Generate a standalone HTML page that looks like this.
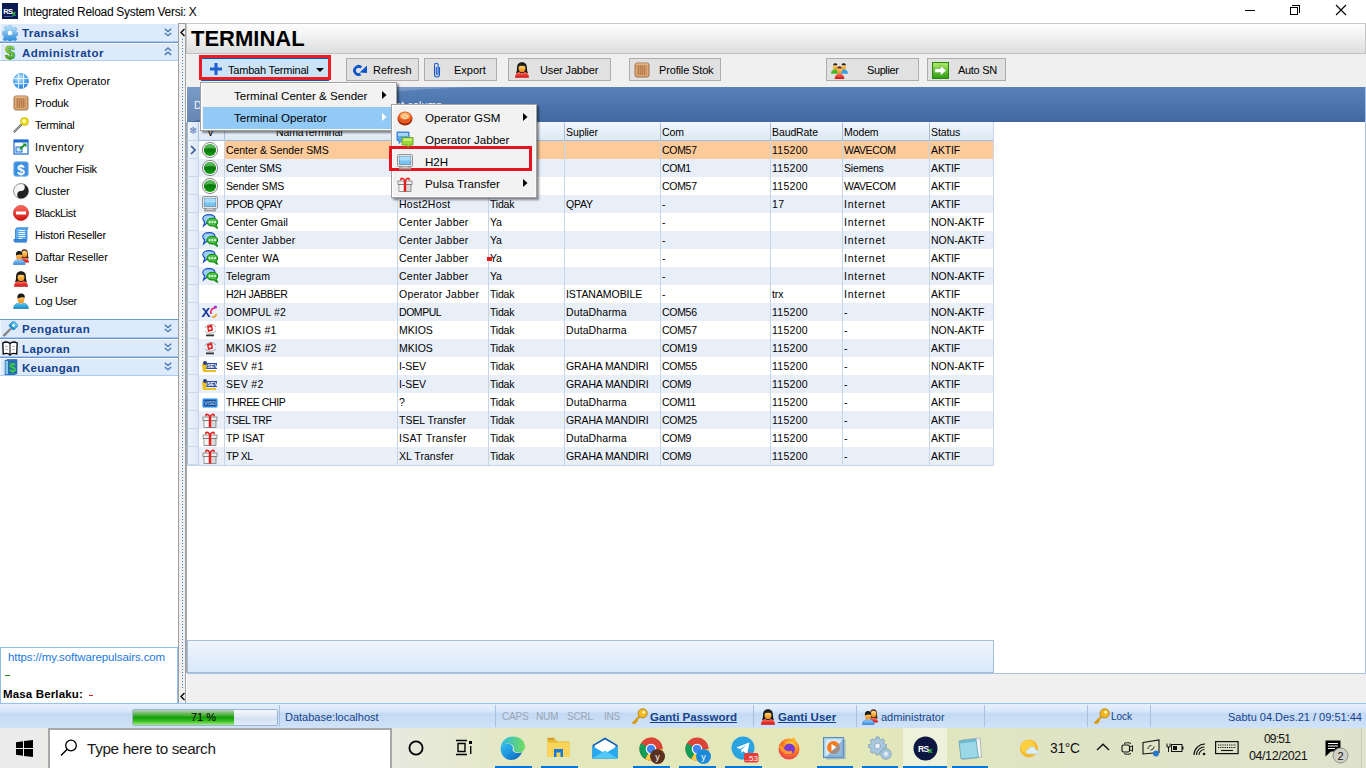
<!DOCTYPE html>
<html><head><meta charset="utf-8">
<style>
*{margin:0;padding:0;box-sizing:border-box}
html,body{width:1366px;height:768px;overflow:hidden;background:#fff;font-family:"Liberation Sans",sans-serif;color:#000}
.a{position:absolute}
.t{position:absolute;white-space:pre;line-height:1}
/* sidebar bands */
.band{position:absolute;left:0;width:178px;height:18px;background:linear-gradient(#dbe9fc,#d3e4fa);border-left:1px solid #f4f8fe}
.band .bt{position:absolute;left:22px;top:3px;font:bold 12px "Liberation Sans",sans-serif;color:#15428b;white-space:pre;line-height:1}
.bl{position:absolute;left:0;width:178px;height:1px;background:#6f9ad6}
.item{position:absolute;left:35px;font-size:11px;white-space:pre;line-height:1}
.btn{position:absolute;top:58px;height:23px;background:#e1e1e1;border:1px solid #adadad}
.btn .t{font-size:11px;top:6px}
.row{position:absolute;left:199px;width:794px;height:18px}
.cell{position:absolute;top:4px;font-size:10.5px;white-space:pre;line-height:1;letter-spacing:-0.15px}
.vline{position:absolute;width:1px;background:#c5d5ea}
</style></head><body>
<svg width="0" height="0" style="position:absolute">
<defs>
<linearGradient id="gBlue" x1="0" y1="0" x2="0" y2="1"><stop offset="0" stop-color="#bfe6fb"/><stop offset="1" stop-color="#1b7fd6"/></linearGradient>
<linearGradient id="gGreen" x1="0" y1="0" x2="0" y2="1"><stop offset="0" stop-color="#b6ee6a"/><stop offset="1" stop-color="#2a9a10"/></linearGradient>
<linearGradient id="gDot" x1="0" y1="0" x2="0" y2="1"><stop offset="0" stop-color="#3aa83a"/><stop offset="0.5" stop-color="#0a780a"/><stop offset="1" stop-color="#10a010"/></linearGradient>
<linearGradient id="gSkin" x1="0" y1="0" x2="0" y2="1"><stop offset="0" stop-color="#ffe08a"/><stop offset="1" stop-color="#f08a10"/></linearGradient>
<linearGradient id="gRed" x1="0" y1="0" x2="0" y2="1"><stop offset="0" stop-color="#ff7060"/><stop offset="1" stop-color="#d01010"/></linearGradient>
<linearGradient id="gCyan" x1="0" y1="0" x2="0" y2="1"><stop offset="0" stop-color="#5fd0f5"/><stop offset="1" stop-color="#1488c8"/></linearGradient>
<linearGradient id="gLBlue" x1="0" y1="0" x2="0" y2="1"><stop offset="0" stop-color="#9ad0fa"/><stop offset="1" stop-color="#3a8ee0"/></linearGradient>
<symbol id="gear" viewBox="0 0 16 16"><path d="M6.6 0.5h2.8l.4 2.2 1.4.6 1.9-1.3 2 2-1.3 1.9.6 1.4 2.2.4v2.8l-2.2.4-.6 1.4 1.3 1.9-2 2-1.9-1.3-1.4.6-.4 2.2H6.6l-.4-2.2-1.4-.6-1.9 1.3-2-2 1.3-1.9-.6-1.4L.5 9.4V6.6l2.2-.4.6-1.4L2 2.9l2-2 1.9 1.3 1.4-.6z" fill="url(#gBlue)" stroke="#5a9ccc" stroke-width=".4"/><circle cx="8" cy="8" r="2.3" fill="#fff"/></symbol>
<symbol id="dollar" viewBox="0 0 16 16"><text x="8" y="15" text-anchor="middle" font-family="Liberation Sans" font-weight="bold" font-size="18" fill="url(#gGreen)" stroke="#2f8a10" stroke-width=".5">$</text></symbol>
<symbol id="globe" viewBox="0 0 16 16"><defs><radialGradient id="glb" cx=".4" cy=".3" r=".8"><stop offset="0" stop-color="#bfe4fc"/><stop offset=".6" stop-color="#4aa6ee"/><stop offset="1" stop-color="#1a6ac8"/></radialGradient></defs><circle cx="8" cy="8" r="7.6" fill="url(#glb)" stroke="#3a88d8" stroke-width=".5"/><path d="M5.5 .8v14.4M10.5 .8v14.4M.8 5.5h14.4M.8 10.5h14.4" stroke="#fff" stroke-width=".9" opacity=".9"/></symbol>
<symbol id="crate" viewBox="0 0 16 16"><rect x="1" y="1" width="14" height="14" rx="2" fill="#dca878" stroke="#9a6a3a" stroke-width=".9"/><rect x="3" y="3.2" width="10" height="9.6" fill="#cf9664"/><path d="M4.5 3.2v9.6M6.5 3.2v9.6M8.5 3.2v9.6M10.5 3.2v9.6" stroke="#a87040" stroke-width=".7"/><path d="M2 2h12" stroke="#f0c898" stroke-width=".8"/></symbol>
<symbol id="pin" viewBox="0 0 16 16"><path d="M1.5 14.5L10 6" stroke="#606060" stroke-width="2.2" stroke-linecap="round"/><path d="M1.5 14.5L10 6" stroke="#d0d0d0" stroke-width=".8"/><circle cx="11.5" cy="4.5" r="4" fill="#f2e020" stroke="#b8a000" stroke-width=".6"/><circle cx="11" cy="4" r="1.8" fill="#fffbb0"/></symbol>
<symbol id="inventory" viewBox="0 0 16 16"><rect x="1" y="1" width="14" height="14" fill="#fff" stroke="#1a6ad0" stroke-width="1.2"/><rect x="1" y="1" width="14" height="2.5" fill="#1a6ad0"/><rect x="3" y="8" width="6" height="5" fill="#cfe4fa" stroke="#1a6ad0"/><path d="M7 10L12 5.5" stroke="#1a9a2a" stroke-width="2"/><path d="M9.5 4.5h4v4z" fill="#1a9a2a"/></symbol>
<symbol id="voucher" viewBox="0 0 16 16"><rect x=".8" y=".8" width="14.4" height="14.4" rx="2" fill="#3a8ee0" stroke="#80b8ee"/><text x="8" y="13.5" text-anchor="middle" font-family="Liberation Sans" font-weight="bold" font-size="14" fill="#fff">$</text></symbol>
<symbol id="yinyang" viewBox="0 0 16 16"><circle cx="8" cy="8" r="7.5" fill="#f4f4f4" stroke="#555" stroke-width=".6"/><path d="M8 .5A7.5 7.5 0 0 1 8 15.5A3.75 3.75 0 0 1 8 8A3.75 3.75 0 0 0 8 .5z" fill="#222"/><circle cx="8" cy="4.25" r="1.1" fill="#fff"/><circle cx="8" cy="11.75" r="1.1" fill="#222"/></symbol>
<symbol id="noentry" viewBox="0 0 16 16"><circle cx="8" cy="8" r="7.6" fill="url(#gRed)" stroke="#b00" stroke-width=".5"/><rect x="3" y="6.5" width="10" height="3" fill="#fff"/></symbol>
<symbol id="scroll" viewBox="0 0 16 16"><path d="M4.5 .8h10.7c-.8.6-1.2 1.3-1.2 2.2v10.5H2.5V3c0-1 .8-2.2 2-2.2z" fill="#5aaaf0" stroke="#1a6ac0" stroke-width=".7"/><path d="M5.5 3.5h6.5M5.5 5.5h6.5M5.5 7.5h6.5M5.5 9.5h6.5M5.5 11.5h4" stroke="#fff" stroke-width=".9"/><path d="M.8 12.5h11.5c0 1.5.5 2.5 1.5 2.7H2.3C1.3 15.2.8 14 .8 12.5z" fill="#3a8ae0" stroke="#1a6ac0" stroke-width=".6"/></symbol>
<symbol id="userF" viewBox="0 0 16 16"><path d="M3 6.5C3 1.5 5.5.3 8 .3s5 1.2 5 6.2c0 2.5.5 3.5 1 4.5H2c.5-1 1-2 1-4.5z" fill="#1a1a1a"/><ellipse cx="8" cy="6.3" rx="3.4" ry="4" fill="url(#gSkin)"/><path d="M4.6 4.5C5 2.5 6.5 1.8 8 1.8s3 .7 3.4 2.7C10 3.5 6 3.5 4.6 4.5z" fill="#1a1a1a"/><path d="M1 15.7c0-3.5 2-5.5 4.5-5.7.8.8 1.6 1.2 2.5 1.2s1.7-.4 2.5-1.2c2.5.2 4.5 2.2 4.5 5.7z" fill="url(#gRed)"/></symbol>
<symbol id="userM" viewBox="0 0 16 16"><ellipse cx="8" cy="6" rx="3.4" ry="4.2" fill="url(#gSkin)"/><path d="M4.5 5.5C4 1.5 6 .5 8 .5s4.3 1 3.7 4.5C10.5 3.5 7 4.5 4.5 5.5z" fill="#1a1a1a"/><path d="M.5 15.7c0-3.5 2.5-5.5 5-5.8.7.7 1.5 1 2.5 1s1.8-.3 2.5-1c2.5.3 5 2.3 5 5.8z" fill="url(#gCyan)" stroke="#1a6a98" stroke-width=".4"/></symbol>
<symbol id="users2" viewBox="0 0 16 16"><path d="M8 5.5C8 1.5 9.5.3 11.5.3s3.5 1.2 3.5 5.2c0 2 .5 3 1 4H7c.5-1 1-2 1-4z" fill="#5a3018"/><ellipse cx="11.5" cy="5" rx="2.7" ry="3.2" fill="url(#gSkin)"/><path d="M7.5 13.5c0-3 1.5-4.5 4-4.5s4.5 1.5 4.5 4.5z" fill="url(#gRed)"/><ellipse cx="6" cy="7" rx="3" ry="3.6" fill="url(#gSkin)"/><path d="M3 6.5C2.6 3 4.3 2 6 2s3.8 1 3.2 4.3C8 5 5 5.5 3 6.5z" fill="#1a1a1a"/><path d="M.3 15.7c0-3.3 2.2-5 4.5-5.2.5.5 1.2.8 1.7.8s1.2-.3 1.7-.8c2.3.2 4 1.9 4 5.2z" fill="url(#gLBlue)" stroke="#2a6ab0" stroke-width=".4"/></symbol>
<symbol id="users3" viewBox="0 0 16 16"><ellipse cx="4" cy="5" rx="2.2" ry="2.6" fill="url(#gSkin)"/><path d="M2 3c0-2.5 4-2.5 4 0z" fill="#222"/><path d="M0 11c0-3 1.5-4 4-4s4 1 4 4z" fill="#4ab82a"/><ellipse cx="12" cy="5" rx="2.2" ry="2.6" fill="url(#gSkin)"/><path d="M10 3c0-2.5 4-2.5 4 0z" fill="#222"/><path d="M8 11c0-3 1.5-4 4-4s4 1 4 4z" fill="#3aa0e8"/><ellipse cx="8" cy="8" rx="2.4" ry="2.8" fill="url(#gSkin)"/><path d="M5.8 6c0-2.8 4.4-2.8 4.4 0z" fill="#6a2a10"/><path d="M3.5 16c0-3.5 2-5 4.5-5s4.5 1.5 4.5 5z" fill="url(#gRed)"/></symbol>
<symbol id="keyBlue" viewBox="0 0 16 16"><path d="M1.5 15L9 7.5" stroke="#888" stroke-width="2.4"/><path d="M2 13l1.5 1.5M3.5 11.5l1.5 1.5" stroke="#888" stroke-width="1.2"/><rect x="8" y="1" width="7" height="7" rx="1.5" transform="rotate(45 11.5 4.5)" fill="url(#gCyan)" stroke="#1a6ab0" stroke-width=".5"/><rect x="10.2" y="3.2" width="2.6" height="2.6" fill="#fff" transform="rotate(45 11.5 4.5)"/></symbol>
<symbol id="book" viewBox="0 0 16 16"><path d="M.8 3l.5 11c2.5-1 5-1 6.7 1 1.7-2 4.2-2 6.7-1l.5-11c-2.5-1.3-5.2-1.3-7.2.5C6 1.7 3.3 1.7.8 3z" fill="#fff" stroke="#000" stroke-width="1.3"/><path d="M8 3.5V15" stroke="#000" stroke-width="1"/><path d="M3 6l3 1M3 9l3 1M10 7l3-1M10 10l3-1" stroke="#888" stroke-width=".7"/></symbol>
<symbol id="moneybook" viewBox="0 0 16 16"><path d="M2 1.5l3-1h9v14l-3 1.5H2z" fill="#2a7ac8" stroke="#1a4a8a" stroke-width=".5"/><rect x="5" y="1.5" width="9" height="13" fill="#2a6ab0"/><rect x="2.5" y="2" width="2.5" height="13" fill="#8ac8f0"/><text x="9.5" y="12.5" text-anchor="middle" font-family="Liberation Sans" font-weight="bold" font-size="12" fill="#3ad03a">$</text></symbol>
<symbol id="plus" viewBox="0 0 12 12"><path d="M4.5 0h3v4.5H12v3H7.5V12h-3V7.5H0v-3h4.5z" fill="#1f5fd0"/></symbol>
<symbol id="refresh" viewBox="0 0 16 12"><path d="M9.3 3.6A4 4 0 1 0 8.5 10" stroke="#0b56c8" stroke-width="2.8" fill="none"/><path d="M7.6 8.6L15 1.6V8.9z" fill="#0b56c8"/></symbol>
<symbol id="clip" viewBox="0 0 10 16"><path d="M7.5 5v7.5a2.5 2.5 0 0 1-5 0V3a1.8 1.8 0 0 1 3.6 0v8.5a.9.9 0 0 1-1.8 0V5" stroke="#1a5ac8" stroke-width="1.1" fill="none"/></symbol>
<symbol id="arrowG" viewBox="0 0 16 16"><rect x=".5" y=".5" width="15" height="15" fill="url(#gGreen)" stroke="#2a8a10"/><path d="M2.5 6h5.5V3l5.5 5-5.5 5v-3H2.5z" fill="#fff" stroke="#3a9a20" stroke-width=".5"/></symbol>
<symbol id="dot" viewBox="0 0 18 18"><circle cx="9" cy="9" r="7.6" fill="#fafafa" stroke="#8a8a8a" stroke-width="1"/><circle cx="9" cy="9" r="6.1" fill="url(#gDot)"/><path d="M3.8 8.2C4.5 5 6.5 3.4 9 3.4s4.5 1.6 5.2 4.2C12 6.6 6 6.6 3.8 8.2z" fill="#7ad07a" opacity=".55"/></symbol>
<symbol id="monitor" viewBox="0 0 16 16"><rect x=".5" y=".5" width="15" height="12" rx="1.2" fill="#e8e8e8" stroke="#8a8a8a" stroke-width=".9"/><rect x="2.2" y="2.2" width="11.6" height="8.4" fill="#78c4f0" stroke="#4a6a8a" stroke-width=".5"/><rect x="2.5" y="2.5" width="11" height="4" fill="#a8dcf8"/><rect x="2" y="13.2" width="12" height="2.3" fill="#a0a0a0"/><rect x="5" y="12.5" width="6" height="1.5" fill="#c8c8c8"/></symbol>
<symbol id="chat" viewBox="0 0 16 16"><path d="M7 .6C10.5.6 13 2.2 13 4.6S10.5 8.6 7 8.6c-.5 0-1 0-1.5-.1L1.5 12l1.3-4.3C1.2 7 .8 5.8.8 4.6.8 2.2 3.5.6 7 .6z" fill="#9ed0f6" stroke="#1a4ac0" stroke-width="1.1"/><path d="M10.3 4.3c3 0 5.3 1.6 5.3 3.8 0 1.2-.6 2.3-1.7 3l1.8 3.5-4-2.8c-.5.1-.9.1-1.4.1-3 0-5.3-1.6-5.3-3.8s2.3-3.8 5.3-3.8z" fill="#4ec048" stroke="#0a8a0a" stroke-width="1.1"/><rect x="6.8" y="7.2" width="1.7" height="1.7" fill="#fff"/><rect x="9.5" y="7.2" width="1.7" height="1.7" fill="#fff"/><rect x="12.2" y="7.2" width="1.7" height="1.7" fill="#fff"/></symbol>
<symbol id="xl" viewBox="0 0 16 14"><path d="M1 3l3 4-3.5 5h2.2L5 8.5 7.3 12h2.2L6 7l3-4H6.8L5 5.5 3.2 3z" fill="#1a3a9a"/><path d="M10 9c-1-3 1-6 4-6" stroke="#f02a70" stroke-width="1.8" fill="none"/><path d="M11 12c2 .5 4-1 4.5-3" stroke="#f0a020" stroke-width="1.8" fill="none"/><circle cx="14.5" cy="2" r="1.5" fill="#a02ad0"/></symbol>
<symbol id="tsel" viewBox="0 0 16 16"><path d="M3 6c2-4 8-5 11-1" stroke="#888" stroke-width=".7" fill="none"/><path d="M3 9c2 3 8 3 11 0" stroke="#888" stroke-width=".7" fill="none"/><path d="M5 4l5-1.5 1 6-5 1.5z" fill="#e81a1a"/><circle cx="8" cy="6.5" r="1.3" fill="#fff"/><rect x="4" y="12.5" width="8" height="1.8" fill="#333"/></symbol>
<symbol id="sev" viewBox="0 0 16 14"><rect x="3" y="3" width="12" height="6" fill="#2a4aa0"/><text x="9" y="8.3" text-anchor="middle" font-family="Liberation Sans" font-weight="bold" font-size="5.5" fill="#fff">I-SEV</text><path d="M0 5c1-3 4-4 5-2l-1 9H1z" fill="#e8c020"/><circle cx="3" cy="3" r="2" fill="#2a3a7a"/><rect x="4" y="10" width="10" height="2" fill="#e8c020"/></symbol>
<symbol id="three" viewBox="0 0 16 10"><rect x=".5" y=".5" width="15" height="9" rx="1.5" fill="#2a8ae0" stroke="#8ac0f0" stroke-width=".6"/><rect x="2" y="2" width="12" height="6" rx="1" fill="#1a4a9a"/><text x="8" y="7" text-anchor="middle" font-family="Liberation Sans" font-size="5" fill="#cfe8ff">VISD</text></symbol>
<symbol id="gift" viewBox="0 0 16 16"><rect x="1" y="5" width="14" height="3.5" fill="#f0f0f0" stroke="#6a6a6a" stroke-width=".7"/><rect x="2" y="8.5" width="12" height="7" fill="#d8d8d8" stroke="#6a6a6a" stroke-width=".7"/><rect x="2.5" y="9" width="4" height="6" fill="#f4f4f4"/><rect x="6.8" y="5" width="2.4" height="10.5" fill="#e81a1a"/><path d="M8 5C6.5 1.5 3 1.5 4 4.3M8 5c1.5-3.5 5-3.5 4-.7" stroke="#e81a1a" stroke-width="1.5" fill="none"/></symbol>
<symbol id="orangebtn" viewBox="0 0 16 16"><ellipse cx="8" cy="9" rx="7.5" ry="6.5" fill="#a02a08"/><ellipse cx="8" cy="7.5" rx="7" ry="6" fill="#e85a20"/><ellipse cx="8" cy="6" rx="5" ry="3.6" fill="#f8b060"/><path d="M6 5a2.3 2.3 0 1 0 4 0" stroke="#fff" stroke-width=".9" fill="none"/><path d="M8 3.5v2.5" stroke="#fff" stroke-width=".9"/></symbol>
<symbol id="keyGold" viewBox="0 0 16 16"><circle cx="11" cy="5" r="4.3" fill="#f5b820" stroke="#b07a10" stroke-width=".8"/><circle cx="12" cy="4" r="1.3" fill="#fff3c0"/><path d="M8 8L1.5 14.5M3 13l1.5 1.5M4.5 11.5l1.5 1.5" stroke="#d89a10" stroke-width="2"/></symbol>
<symbol id="chev2d" viewBox="0 0 8 9"><path d="M.8 .8L4 3.5 7.2.8M.8 5L4 7.7 7.2 5" stroke="#4a78b8" stroke-width="1.4" fill="none"/></symbol>
<symbol id="chev2u" viewBox="0 0 8 9"><path d="M.8 3.7L4 1 7.2 3.7M.8 7.9L4 5.2 7.2 7.9" stroke="#4a78b8" stroke-width="1.4" fill="none"/></symbol>
</defs></svg>

<!-- TITLE BAR -->
<div class="a" style="left:0;top:0;width:1366px;height:23px;background:#fff"></div>
<svg class="a" style="left:2px;top:3px" width="16" height="16"><rect width="16" height="16" fill="#0c1a52"/><text x="1.2" y="11" font-family="Liberation Sans" font-weight="bold" font-size="7.5" fill="#fff" letter-spacing="-0.6">RS</text><text x="10" y="12.5" font-family="Liberation Sans" font-weight="bold" font-size="7" fill="#2ad04a">x</text><rect x="2" y="13" width="9" height=".6" fill="#8090c0"/></svg>
<div class="t" style="left:23px;top:6px;font-size:12px;color:#000;letter-spacing:-0.3px">Integrated Reload System Versi: X</div>
<div class="a" style="left:1245px;top:10px;width:10px;height:1px;background:#000"></div>
<div class="a" style="left:1290px;top:7px;width:8px;height:8px;border:1px solid #000"></div>
<div class="a" style="left:1292px;top:5px;width:8px;height:8px;border-top:1px solid #000;border-right:1px solid #000"></div>
<svg class="a" style="left:1335px;top:4px" width="12" height="12"><path d="M1 1L11 11M11 1L1 11" stroke="#000" stroke-width="1.1"/></svg>
<div class="a" style="left:178px;top:23px;width:1188px;height:1px;background:#c8c8c8"></div>

<!-- SIDEBAR -->
<div class="a" style="left:0;top:24px;width:178px;height:679px;background:#fff"></div>
<div class="a" style="left:0;top:24px;width:178px;height:17px;background:#dceafc;border-left:1px solid #f2f7fe"></div>
<div class="t" style="left:22px;top:27px;font:bold 11.5px 'Liberation Sans';color:#15428b;letter-spacing:0.45px">Transaksi</div>
<div class="a" style="left:0;top:41px;width:178px;height:1px;background:#a8c8f0"></div>
<div class="a" style="left:0;top:42px;width:178px;height:1px;background:#6898d0"></div>
<div class="a" style="left:0;top:44px;width:178px;height:16px;background:#dceafc;border-left:1px solid #f2f7fe"></div>
<div class="t" style="left:22px;top:47px;font:bold 11.5px 'Liberation Sans';color:#15428b;letter-spacing:0.5px">Administrator</div>
<div class="a" style="left:0;top:60px;width:178px;height:1px;background:#a8ccf4"></div>
<div class="item" style="top:76px;letter-spacing:0.04px">Prefix Operator</div>
<div class="item" style="top:98px;letter-spacing:-0.22px">Produk</div>
<div class="item" style="top:120px;letter-spacing:-0.26px">Terminal</div>
<div class="item" style="top:142px;letter-spacing:0.44px">Inventory</div>
<div class="item" style="top:164px;letter-spacing:-0.33px">Voucher Fisik</div>
<div class="item" style="top:186px;letter-spacing:-0.03px">Cluster</div>
<div class="item" style="top:208px;letter-spacing:-0.38px">BlackList</div>
<div class="item" style="top:230px;letter-spacing:-0.23px">Histori Reseller</div>
<div class="item" style="top:252px;letter-spacing:-0.04px">Daftar Reseller</div>
<div class="item" style="top:274px;letter-spacing:-0.2px">User</div>
<div class="item" style="top:296px;letter-spacing:-0.37px">Log User</div>
<div class="a" style="left:0;top:319px;width:178px;height:1px;background:#6898d0"></div>
<div class="a" style="left:0;top:320px;width:178px;height:17px;background:#dceafc;border-left:1px solid #f2f7fe"></div>
<div class="t" style="left:22px;top:323px;font:bold 11.5px 'Liberation Sans';color:#15428b;letter-spacing:0.5px">Pengaturan</div>
<div class="a" style="left:0;top:337px;width:178px;height:1px;background:#a8c8f0"></div>
<div class="a" style="left:0;top:338px;width:178px;height:1px;background:#6898d0"></div>
<div class="a" style="left:0;top:340px;width:178px;height:16px;background:#dceafc;border-left:1px solid #f2f7fe"></div>
<div class="t" style="left:22px;top:343px;font:bold 11.5px 'Liberation Sans';color:#15428b;letter-spacing:0.4px">Laporan</div>
<div class="a" style="left:0;top:356px;width:178px;height:1px;background:#a8c8f0"></div>
<div class="a" style="left:0;top:357px;width:178px;height:1px;background:#6898d0"></div>
<div class="a" style="left:0;top:359px;width:178px;height:16px;background:#dceafc;border-left:1px solid #f2f7fe"></div>
<div class="t" style="left:22px;top:362px;font:bold 11.5px 'Liberation Sans';color:#15428b;letter-spacing:0.3px">Keuangan</div>
<div class="a" style="left:0;top:375px;width:178px;height:1px;background:#a8ccf4"></div>
<!-- info box -->
<div class="a" style="left:0;top:647px;width:178px;height:57px;border:1px solid #8fbdf0;background:#fff"></div>
<div class="t" style="left:8px;top:652px;font-size:11.5px;color:#1a78e0;letter-spacing:-0.1px">https://my.softwarepulsairs.com</div>
<div class="a" style="left:5px;top:675px;width:5px;height:1px;background:#1a8a1a"></div>
<div class="t" style="left:3px;top:688px;font:bold 11.5px 'Liberation Sans';color:#000;letter-spacing:0.15px">Masa Berlaku:</div>
<div class="a" style="left:89px;top:695px;width:4px;height:1px;background:#e02020"></div>
<!-- SPLITTER -->
<div class="a" style="left:178px;top:23px;width:8px;height:681px;background:#f0f0f0;border:1px solid #a0a0a0"></div>
<div class="a" style="left:182px;top:39px;width:1px;height:650px;background:repeating-linear-gradient(#2a86e8 0 1.5px,transparent 1.5px 3px)"></div>
<svg class="a" style="left:180px;top:28px" width="6" height="9"><path d="M4.5 1L1 4.5L4.5 8" stroke="#000" stroke-width="1.3" fill="none"/></svg>
<svg class="a" style="left:180px;top:692px" width="6" height="9"><path d="M4.5 1L1 4.5L4.5 8" stroke="#000" stroke-width="1.3" fill="none"/></svg>

<!-- CONTENT -->
<div class="a" style="left:186px;top:23px;width:1180px;height:31px;background:linear-gradient(#fdfdfd,#f2f2f2 40%,#dedede);border-top:1px solid #c8c8c8;border-left:1px solid #c8c8c8;border-right:1px solid #c8c8c8;border-bottom:1px solid #c0c0c0"></div>
<div class="t" style="left:191px;top:26px;font:bold 22px 'Liberation Sans';color:#000">TERMINAL</div>
<div class="a" style="left:186px;top:54px;width:1180px;height:33px;background:#f0f0f0"></div>
<!-- toolbar buttons -->
<div class="a" style="left:201px;top:57px;width:128px;height:24px;background:#cce4f7;border-top:2px solid #0a58b8;border-bottom:1px solid #0a58b8"></div>
<div class="a" style="left:199px;top:55px;width:132px;height:25px;border:3px solid #ec1c24"></div>
<div class="t" style="left:228px;top:65px;font-size:11px;letter-spacing:-0.2px">Tambah Terminal</div>
<svg class="a" style="left:316px;top:68px" width="8" height="5"><path d="M0 0H8L4 4Z" fill="#000"/></svg>
<div class="btn" style="left:346px;width:73px"><div class="t" style="left:26px">Refresh</div></div>
<div class="btn" style="left:424px;width:73px"><div class="t" style="left:29px">Export</div></div>
<div class="btn" style="left:508px;width:103px"><div class="t" style="left:31px;letter-spacing:-0.15px">User Jabber</div></div>
<div class="btn" style="left:629px;width:92px"><div class="t" style="left:29px;letter-spacing:-0.15px">Profile Stok</div></div>
<div class="btn" style="left:826px;width:93px"><div class="t" style="left:40px;letter-spacing:-0.4px">Suplier</div></div>
<div class="btn" style="left:927px;width:79px"><div class="t" style="left:30px;letter-spacing:-0.3px">Auto SN</div></div>
<!-- blue group band -->
<div class="a" style="left:187px;top:87px;width:1178px;height:35px;background:linear-gradient(#5882b9,#4168a0)"></div>
<svg class="a" style="left:187px;top:87px" width="300" height="35"><path d="M0 0H290Q220 2 180 8T0 35Z" fill="#ffffff" opacity="0.2"/></svg>
<div class="t" style="left:194px;top:100px;font-size:10.5px;letter-spacing:0.16px;color:#f4f8ff">Drag a column header here to group by that column</div>
<!-- grid area white -->
<div class="a" style="left:187px;top:122px;width:1179px;height:518px;background:#fff"></div>
<div class="a" style="left:186px;top:122px;width:1px;height:551px;background:#a8a8a8"></div>
<!-- footer panel -->
<div class="a" style="left:187px;top:640px;width:807px;height:33px;background:linear-gradient(#eff5fd,#d9e8fa);border:1px solid #a4bddc"></div>
<div class="a" style="left:187px;top:673px;width:1179px;height:30px;background:#f0f0f0"></div>
<div class="a" style="left:187px;top:673px;width:1179px;height:1px;background:#a9c1e0"></div>
<div class="a" style="left:1365px;top:87px;width:1px;height:587px;background:#a9c1e0"></div>

<!-- GRID -->
<div class="a" style="left:187px;top:122px;width:806px;height:19px;background:linear-gradient(#f3f7fd,#dde8f6);border-bottom:1px solid #9ebbe0"></div>
<div class="cell" style="left:207px;top:127px;letter-spacing:-0.1px">V</div>
<div class="cell" style="left:276px;top:127px;letter-spacing:-0.1px">NamaTerminal</div>
<div class="cell" style="left:399px;top:127px;letter-spacing:-0.1px">Jenis</div>
<div class="cell" style="left:490px;top:127px;letter-spacing:-0.1px">Aktif</div>
<div class="cell" style="left:566px;top:127px;letter-spacing:-0.1px">Suplier</div>
<div class="cell" style="left:662px;top:127px;letter-spacing:-0.1px">Com</div>
<div class="cell" style="left:772px;top:127px;letter-spacing:-0.1px">BaudRate</div>
<div class="cell" style="left:844px;top:127px;letter-spacing:-0.1px">Modem</div>
<div class="cell" style="left:931px;top:127px;letter-spacing:-0.1px">Status</div>
<div class="a" style="left:199px;top:141px;width:794px;height:18px;background:#ffffff"></div>
<div class="a" style="left:225px;top:141px;width:768px;height:18px;background:#fdcb9a"></div>
<div class="cell" style="left:226px;top:145px;letter-spacing:-0.06px">Center &amp; Sender SMS</div>
<div class="cell" style="left:399px;top:145px;letter-spacing:-0.1px">Center</div>
<div class="cell" style="left:490px;top:145px;letter-spacing:-0.3px">Ya</div>
<div class="cell" style="left:662px;top:145px;letter-spacing:-0.3px">COM57</div>
<div class="cell" style="left:772px;top:145px;letter-spacing:0.28px">115200</div>
<div class="cell" style="left:844px;top:145px;letter-spacing:-0.38px">WAVECOM</div>
<div class="cell" style="left:931px;top:145px;letter-spacing:-0.12px">AKTIF</div>
<div class="a" style="left:199px;top:159px;width:794px;height:18px;background:#e9eff9"></div>
<div class="cell" style="left:226px;top:163px;letter-spacing:-0.16px">Center SMS</div>
<div class="cell" style="left:399px;top:163px;letter-spacing:-0.1px">Center</div>
<div class="cell" style="left:490px;top:163px;letter-spacing:-0.3px">Ya</div>
<div class="cell" style="left:662px;top:163px;letter-spacing:-0.43px">COM1</div>
<div class="cell" style="left:772px;top:163px;letter-spacing:0.28px">115200</div>
<div class="cell" style="left:844px;top:163px;letter-spacing:-0.17px">Siemens</div>
<div class="cell" style="left:931px;top:163px;letter-spacing:-0.12px">AKTIF</div>
<div class="a" style="left:199px;top:177px;width:794px;height:18px;background:#ffffff"></div>
<div class="cell" style="left:226px;top:181px;letter-spacing:-0.13px">Sender SMS</div>
<div class="cell" style="left:399px;top:181px;letter-spacing:-0.1px">Sender</div>
<div class="cell" style="left:490px;top:181px;letter-spacing:-0.3px">Ya</div>
<div class="cell" style="left:662px;top:181px;letter-spacing:-0.3px">COM57</div>
<div class="cell" style="left:772px;top:181px;letter-spacing:0.28px">115200</div>
<div class="cell" style="left:844px;top:181px;letter-spacing:-0.38px">WAVECOM</div>
<div class="cell" style="left:931px;top:181px;letter-spacing:-0.12px">AKTIF</div>
<div class="a" style="left:199px;top:195px;width:794px;height:18px;background:#e9eff9"></div>
<div class="cell" style="left:226px;top:199px;letter-spacing:-0.38px">PPOB QPAY</div>
<div class="cell" style="left:399px;top:199px;letter-spacing:0.28px">Host2Host</div>
<div class="cell" style="left:490px;top:199px;letter-spacing:-0.2px">Tidak</div>
<div class="cell" style="left:566px;top:199px;letter-spacing:-0.17px">QPAY</div>
<div class="cell" style="left:662px;top:199px;letter-spacing:-0.1px">-</div>
<div class="cell" style="left:772px;top:199px;letter-spacing:0.5px">17</div>
<div class="cell" style="left:844px;top:199px;letter-spacing:0.76px">Internet</div>
<div class="cell" style="left:931px;top:199px;letter-spacing:-0.12px">AKTIF</div>
<div class="a" style="left:199px;top:213px;width:794px;height:18px;background:#ffffff"></div>
<div class="cell" style="left:226px;top:217px;letter-spacing:0.0px">Center Gmail</div>
<div class="cell" style="left:399px;top:217px;letter-spacing:0.23px">Center Jabber</div>
<div class="cell" style="left:490px;top:217px;letter-spacing:-0.3px">Ya</div>
<div class="cell" style="left:662px;top:217px;letter-spacing:-0.1px">-</div>
<div class="cell" style="left:844px;top:217px;letter-spacing:0.76px">Internet</div>
<div class="cell" style="left:931px;top:217px;letter-spacing:-0.03px">NON-AKTF</div>
<div class="a" style="left:199px;top:231px;width:794px;height:18px;background:#e9eff9"></div>
<div class="cell" style="left:226px;top:235px;letter-spacing:0.23px">Center Jabber</div>
<div class="cell" style="left:399px;top:235px;letter-spacing:0.23px">Center Jabber</div>
<div class="cell" style="left:490px;top:235px;letter-spacing:-0.3px">Ya</div>
<div class="cell" style="left:662px;top:235px;letter-spacing:-0.1px">-</div>
<div class="cell" style="left:844px;top:235px;letter-spacing:0.76px">Internet</div>
<div class="cell" style="left:931px;top:235px;letter-spacing:-0.03px">NON-AKTF</div>
<div class="a" style="left:199px;top:249px;width:794px;height:18px;background:#ffffff"></div>
<div class="cell" style="left:226px;top:253px;letter-spacing:0.25px">Center WA</div>
<div class="cell" style="left:399px;top:253px;letter-spacing:0.23px">Center Jabber</div>
<div class="cell" style="left:490px;top:253px;letter-spacing:-0.3px">Ya</div>
<div class="cell" style="left:662px;top:253px;letter-spacing:-0.1px">-</div>
<div class="cell" style="left:844px;top:253px;letter-spacing:0.76px">Internet</div>
<div class="cell" style="left:931px;top:253px;letter-spacing:-0.12px">AKTIF</div>
<div class="a" style="left:199px;top:267px;width:794px;height:18px;background:#e9eff9"></div>
<div class="cell" style="left:226px;top:271px;letter-spacing:0.1px">Telegram</div>
<div class="cell" style="left:399px;top:271px;letter-spacing:0.23px">Center Jabber</div>
<div class="cell" style="left:490px;top:271px;letter-spacing:-0.3px">Ya</div>
<div class="cell" style="left:662px;top:271px;letter-spacing:-0.1px">-</div>
<div class="cell" style="left:844px;top:271px;letter-spacing:0.76px">Internet</div>
<div class="cell" style="left:931px;top:271px;letter-spacing:-0.03px">NON-AKTF</div>
<div class="a" style="left:199px;top:285px;width:794px;height:18px;background:#ffffff"></div>
<div class="cell" style="left:226px;top:289px;letter-spacing:-0.33px">H2H JABBER</div>
<div class="cell" style="left:399px;top:289px;letter-spacing:0.25px">Operator Jabber</div>
<div class="cell" style="left:490px;top:289px;letter-spacing:-0.2px">Tidak</div>
<div class="cell" style="left:566px;top:289px;letter-spacing:-0.05px">ISTANAMOBILE</div>
<div class="cell" style="left:662px;top:289px;letter-spacing:-0.1px">-</div>
<div class="cell" style="left:772px;top:289px;letter-spacing:-0.1px">trx</div>
<div class="cell" style="left:844px;top:289px;letter-spacing:0.76px">Internet</div>
<div class="cell" style="left:931px;top:289px;letter-spacing:-0.12px">AKTIF</div>
<div class="a" style="left:199px;top:303px;width:794px;height:18px;background:#e9eff9"></div>
<div class="cell" style="left:226px;top:307px;letter-spacing:0.09px">DOMPUL #2</div>
<div class="cell" style="left:399px;top:307px;letter-spacing:-0.45px">DOMPUL</div>
<div class="cell" style="left:490px;top:307px;letter-spacing:-0.2px">Tidak</div>
<div class="cell" style="left:566px;top:307px;letter-spacing:0.11px">DutaDharma</div>
<div class="cell" style="left:662px;top:307px;letter-spacing:-0.3px">COM56</div>
<div class="cell" style="left:772px;top:307px;letter-spacing:0.28px">115200</div>
<div class="cell" style="left:844px;top:307px;letter-spacing:-0.1px">-</div>
<div class="cell" style="left:931px;top:307px;letter-spacing:-0.03px">NON-AKTF</div>
<div class="a" style="left:199px;top:321px;width:794px;height:18px;background:#ffffff"></div>
<div class="cell" style="left:226px;top:325px;letter-spacing:0.29px">MKIOS #1</div>
<div class="cell" style="left:399px;top:325px;letter-spacing:0.0px">MKIOS</div>
<div class="cell" style="left:490px;top:325px;letter-spacing:-0.2px">Tidak</div>
<div class="cell" style="left:566px;top:325px;letter-spacing:0.11px">DutaDharma</div>
<div class="cell" style="left:662px;top:325px;letter-spacing:-0.3px">COM57</div>
<div class="cell" style="left:772px;top:325px;letter-spacing:0.28px">115200</div>
<div class="cell" style="left:844px;top:325px;letter-spacing:-0.1px">-</div>
<div class="cell" style="left:931px;top:325px;letter-spacing:-0.03px">NON-AKTF</div>
<div class="a" style="left:199px;top:339px;width:794px;height:18px;background:#e9eff9"></div>
<div class="cell" style="left:226px;top:343px;letter-spacing:0.29px">MKIOS #2</div>
<div class="cell" style="left:399px;top:343px;letter-spacing:0.0px">MKIOS</div>
<div class="cell" style="left:490px;top:343px;letter-spacing:-0.2px">Tidak</div>
<div class="cell" style="left:662px;top:343px;letter-spacing:-0.3px">COM19</div>
<div class="cell" style="left:772px;top:343px;letter-spacing:0.28px">115200</div>
<div class="cell" style="left:844px;top:343px;letter-spacing:-0.1px">-</div>
<div class="cell" style="left:931px;top:343px;letter-spacing:-0.12px">AKTIF</div>
<div class="a" style="left:199px;top:357px;width:794px;height:18px;background:#ffffff"></div>
<div class="cell" style="left:226px;top:361px;letter-spacing:0.34px">SEV #1</div>
<div class="cell" style="left:399px;top:361px;letter-spacing:-0.08px">I-SEV</div>
<div class="cell" style="left:490px;top:361px;letter-spacing:-0.2px">Tidak</div>
<div class="cell" style="left:566px;top:361px;letter-spacing:-0.12px">GRAHA MANDIRI</div>
<div class="cell" style="left:662px;top:361px;letter-spacing:-0.3px">COM55</div>
<div class="cell" style="left:772px;top:361px;letter-spacing:0.28px">115200</div>
<div class="cell" style="left:844px;top:361px;letter-spacing:-0.1px">-</div>
<div class="cell" style="left:931px;top:361px;letter-spacing:-0.03px">NON-AKTF</div>
<div class="a" style="left:199px;top:375px;width:794px;height:18px;background:#e9eff9"></div>
<div class="cell" style="left:226px;top:379px;letter-spacing:0.34px">SEV #2</div>
<div class="cell" style="left:399px;top:379px;letter-spacing:-0.08px">I-SEV</div>
<div class="cell" style="left:490px;top:379px;letter-spacing:-0.2px">Tidak</div>
<div class="cell" style="left:566px;top:379px;letter-spacing:-0.12px">GRAHA MANDIRI</div>
<div class="cell" style="left:662px;top:379px;letter-spacing:-0.3px">COM9</div>
<div class="cell" style="left:772px;top:379px;letter-spacing:0.28px">115200</div>
<div class="cell" style="left:844px;top:379px;letter-spacing:-0.1px">-</div>
<div class="cell" style="left:931px;top:379px;letter-spacing:-0.12px">AKTIF</div>
<div class="a" style="left:199px;top:393px;width:794px;height:18px;background:#ffffff"></div>
<div class="cell" style="left:226px;top:397px;letter-spacing:-0.44px">THREE CHIP</div>
<div class="cell" style="left:399px;top:397px;letter-spacing:-0.1px">?</div>
<div class="cell" style="left:490px;top:397px;letter-spacing:-0.2px">Tidak</div>
<div class="cell" style="left:566px;top:397px;letter-spacing:0.11px">DutaDharma</div>
<div class="cell" style="left:662px;top:397px;letter-spacing:-0.3px">COM11</div>
<div class="cell" style="left:772px;top:397px;letter-spacing:0.28px">115200</div>
<div class="cell" style="left:844px;top:397px;letter-spacing:-0.1px">-</div>
<div class="cell" style="left:931px;top:397px;letter-spacing:-0.12px">AKTIF</div>
<div class="a" style="left:199px;top:411px;width:794px;height:18px;background:#e9eff9"></div>
<div class="cell" style="left:226px;top:415px;letter-spacing:-0.45px">TSEL TRF</div>
<div class="cell" style="left:399px;top:415px;letter-spacing:-0.02px">TSEL Transfer</div>
<div class="cell" style="left:490px;top:415px;letter-spacing:-0.2px">Tidak</div>
<div class="cell" style="left:566px;top:415px;letter-spacing:-0.12px">GRAHA MANDIRI</div>
<div class="cell" style="left:662px;top:415px;letter-spacing:-0.3px">COM25</div>
<div class="cell" style="left:772px;top:415px;letter-spacing:0.28px">115200</div>
<div class="cell" style="left:844px;top:415px;letter-spacing:-0.1px">-</div>
<div class="cell" style="left:931px;top:415px;letter-spacing:-0.12px">AKTIF</div>
<div class="a" style="left:199px;top:429px;width:794px;height:18px;background:#ffffff"></div>
<div class="cell" style="left:226px;top:433px;letter-spacing:0.0px">TP ISAT</div>
<div class="cell" style="left:399px;top:433px;letter-spacing:0.31px">ISAT Transfer</div>
<div class="cell" style="left:490px;top:433px;letter-spacing:-0.2px">Tidak</div>
<div class="cell" style="left:566px;top:433px;letter-spacing:0.11px">DutaDharma</div>
<div class="cell" style="left:662px;top:433px;letter-spacing:-0.3px">COM9</div>
<div class="cell" style="left:772px;top:433px;letter-spacing:0.28px">115200</div>
<div class="cell" style="left:844px;top:433px;letter-spacing:-0.1px">-</div>
<div class="cell" style="left:931px;top:433px;letter-spacing:-0.12px">AKTIF</div>
<div class="a" style="left:199px;top:447px;width:794px;height:18px;background:#e9eff9"></div>
<div class="cell" style="left:226px;top:451px;letter-spacing:-0.45px">TP XL</div>
<div class="cell" style="left:399px;top:451px;letter-spacing:0.05px">XL Transfer</div>
<div class="cell" style="left:490px;top:451px;letter-spacing:-0.2px">Tidak</div>
<div class="cell" style="left:566px;top:451px;letter-spacing:-0.12px">GRAHA MANDIRI</div>
<div class="cell" style="left:662px;top:451px;letter-spacing:-0.3px">COM9</div>
<div class="cell" style="left:772px;top:451px;letter-spacing:0.28px">115200</div>
<div class="cell" style="left:844px;top:451px;letter-spacing:-0.1px">-</div>
<div class="cell" style="left:931px;top:451px;letter-spacing:-0.12px">AKTIF</div>
<div class="a" style="left:187px;top:122px;width:12px;height:343px;background:linear-gradient(90deg,#eef3fb,#dde8f6);border-left:1px solid #9ebbe0;border-right:1px solid #9ebbe0"></div>
<div class="a" style="left:187px;top:140px;width:12px;height:1px;background:#c9d8ec"></div>
<div class="a" style="left:187px;top:158px;width:12px;height:1px;background:#c9d8ec"></div>
<div class="a" style="left:187px;top:176px;width:12px;height:1px;background:#c9d8ec"></div>
<div class="a" style="left:187px;top:194px;width:12px;height:1px;background:#c9d8ec"></div>
<div class="a" style="left:187px;top:212px;width:12px;height:1px;background:#c9d8ec"></div>
<div class="a" style="left:187px;top:230px;width:12px;height:1px;background:#c9d8ec"></div>
<div class="a" style="left:187px;top:248px;width:12px;height:1px;background:#c9d8ec"></div>
<div class="a" style="left:187px;top:266px;width:12px;height:1px;background:#c9d8ec"></div>
<div class="a" style="left:187px;top:284px;width:12px;height:1px;background:#c9d8ec"></div>
<div class="a" style="left:187px;top:302px;width:12px;height:1px;background:#c9d8ec"></div>
<div class="a" style="left:187px;top:320px;width:12px;height:1px;background:#c9d8ec"></div>
<div class="a" style="left:187px;top:338px;width:12px;height:1px;background:#c9d8ec"></div>
<div class="a" style="left:187px;top:356px;width:12px;height:1px;background:#c9d8ec"></div>
<div class="a" style="left:187px;top:374px;width:12px;height:1px;background:#c9d8ec"></div>
<div class="a" style="left:187px;top:392px;width:12px;height:1px;background:#c9d8ec"></div>
<div class="a" style="left:187px;top:410px;width:12px;height:1px;background:#c9d8ec"></div>
<div class="a" style="left:187px;top:428px;width:12px;height:1px;background:#c9d8ec"></div>
<div class="a" style="left:187px;top:446px;width:12px;height:1px;background:#c9d8ec"></div>
<div class="a" style="left:187px;top:464px;width:12px;height:1px;background:#c9d8ec"></div>
<div class="vline" style="left:198px;top:122px;height:343px"></div>
<div class="vline" style="left:224px;top:122px;height:343px"></div>
<div class="vline" style="left:397px;top:122px;height:343px"></div>
<div class="vline" style="left:488px;top:122px;height:343px"></div>
<div class="vline" style="left:564px;top:122px;height:343px"></div>
<div class="vline" style="left:660px;top:122px;height:343px"></div>
<div class="vline" style="left:770px;top:122px;height:343px"></div>
<div class="vline" style="left:842px;top:122px;height:343px"></div>
<div class="vline" style="left:929px;top:122px;height:343px"></div>
<div class="vline" style="left:993px;top:122px;height:343px"></div>
<div class="a" style="left:187px;top:465px;width:807px;height:1px;background:#c5d5ea"></div>
<div class="a" style="left:198px;top:123px;width:1px;height:17px;background:#a8c0de"></div>
<div class="a" style="left:224px;top:123px;width:1px;height:17px;background:#a8c0de"></div>
<div class="a" style="left:397px;top:123px;width:1px;height:17px;background:#a8c0de"></div>
<div class="a" style="left:488px;top:123px;width:1px;height:17px;background:#a8c0de"></div>
<div class="a" style="left:564px;top:123px;width:1px;height:17px;background:#a8c0de"></div>
<div class="a" style="left:660px;top:123px;width:1px;height:17px;background:#a8c0de"></div>
<div class="a" style="left:770px;top:123px;width:1px;height:17px;background:#a8c0de"></div>
<div class="a" style="left:842px;top:123px;width:1px;height:17px;background:#a8c0de"></div>
<div class="a" style="left:929px;top:123px;width:1px;height:17px;background:#a8c0de"></div>

<!-- STATUS BAR -->
<div class="a" style="left:0;top:703px;width:1366px;height:25px;background:linear-gradient(#e6f0fc 0,#d8e7f9 30%,#c4daf4 40%,#cfe2f8 100%);border-top:1px solid #94c2f2"></div>
<div class="a" style="left:132px;top:709px;width:146px;height:17px;background:linear-gradient(#f4f8fd,#dde8f5 50%,#cfdff2 51%,#e2ecf8);border:1px solid #9ab4d6;border-radius:2px"></div>
<div class="a" style="left:133px;top:710px;width:101px;height:15px;background:linear-gradient(#bcd0bc 0,#6ab85a 25%,#14a00a 50%,#34bc1c 72%,#a4ea84 100%)"></div>
<div class="t" style="left:191px;top:712px;font-size:11px;color:#000">71 %</div>
<div class="a" style="left:279px;top:705px;width:1px;height:22px;background:#a9c0de"></div>
<div class="t" style="left:285px;top:712px;font-size:11px;color:#15428b">Database:localhost</div>
<div class="a" style="left:495px;top:705px;width:1px;height:22px;background:#a9c0de"></div>
<div class="t" style="left:502px;top:712px;font-size:10px;color:#9aa6b6;letter-spacing:-0.2px">CAPS</div>
<div class="t" style="left:536px;top:712px;font-size:10px;color:#9aa6b6;letter-spacing:-0.2px">NUM</div>
<div class="t" style="left:567px;top:712px;font-size:10px;color:#9aa6b6;letter-spacing:-0.2px">SCRL</div>
<div class="t" style="left:604px;top:712px;font-size:10px;color:#9aa6b6;letter-spacing:-0.2px">INS</div>
<div class="t" style="left:650px;top:711px;font:bold 11.5px 'Liberation Sans';color:#15428b;text-decoration:underline">Ganti Password</div>
<div class="a" style="left:753px;top:705px;width:1px;height:22px;background:#a9c0de"></div>
<div class="t" style="left:778px;top:711px;font:bold 11.5px 'Liberation Sans';color:#15428b;text-decoration:underline">Ganti User</div>
<div class="a" style="left:856px;top:705px;width:1px;height:22px;background:#a9c0de"></div>
<div class="t" style="left:881px;top:712px;font-size:11px;color:#15428b">administrator</div>
<div class="a" style="left:984px;top:705px;width:1px;height:22px;background:#a9c0de"></div>
<div class="a" style="left:1087px;top:705px;width:1px;height:22px;background:#a9c0de"></div>
<div class="t" style="left:1111px;top:712px;font-size:10px;color:#15428b">Lock</div>
<div class="a" style="left:1150px;top:705px;width:1px;height:22px;background:#a9c0de"></div>
<div class="t" style="left:1228px;top:712px;font-size:11px;color:#15428b">Sabtu 04.Des.21 / 09:51:44</div>

<!-- TASKBAR -->
<div class="a" style="left:0;top:728px;width:1366px;height:40px;background:linear-gradient(90deg,#ebebeb 0,#e8e9e0 392px,#e3e8bc 540px,#e2e8b9 880px,#dfe4c4 1020px,#dfe3cc 1366px)"></div>
<svg class="a" style="left:16px;top:740px" width="17" height="17"><path d="M0 2.3L7 1.3V8H0Z M8 1.1L17 0V8H8Z M0 9H7V15.7L0 14.7Z M8 9H17V17L8 15.9Z" fill="#000"/></svg>
<div class="a" style="left:48px;top:728px;width:344px;height:40px;background:#fff;border:2px solid #a8a8a8;border-bottom:none"></div>
<svg class="a" style="left:60px;top:739px" width="18" height="18"><circle cx="11" cy="6.5" r="5.3" stroke="#000" stroke-width="1.3" fill="none"/><path d="M7.2 10.3L1 16.5" stroke="#000" stroke-width="1.5"/></svg>
<div class="t" style="left:87px;top:740.5px;font-size:15.3px;letter-spacing:-0.35px;color:#1a1a1a">Type here to search</div>
<svg class="a" style="left:408px;top:740px" width="16" height="16"><circle cx="8" cy="8" r="6.6" stroke="#000" stroke-width="1.8" fill="none"/></svg>
<svg class="a" style="left:455px;top:739px" width="18" height="17"><path d="M1 1.5H12M1 15.5H12M3 4.5H10V12.5H3Z" stroke="#000" stroke-width="1.4" fill="none"/><rect x="14" y="2" width="3" height="3" fill="#000"/><rect x="15" y="7" width="1.4" height="8" fill="#000"/></svg>
<div class="a" style="left:495px;top:766px;width:37px;height:2px;background:#0078d7"></div>
<div class="a" style="left:541px;top:766px;width:37px;height:2px;background:#0078d7"></div>
<div class="a" style="left:633px;top:766px;width:37px;height:2px;background:#0078d7"></div>
<div class="a" style="left:679px;top:766px;width:37px;height:2px;background:#0078d7"></div>
<div class="a" style="left:725px;top:766px;width:37px;height:2px;background:#0078d7"></div>
<div class="a" style="left:817px;top:766px;width:36px;height:2px;background:#0078d7"></div>
<div class="a" style="left:862px;top:766px;width:36px;height:2px;background:#0078d7"></div>
<div class="a" style="left:903px;top:766px;width:44px;height:2px;background:#0078d7"></div>
<div class="a" style="left:952px;top:766px;width:36px;height:2px;background:#0078d7"></div>
<div class="a" style="left:903px;top:728px;width:44px;height:38px;background:rgba(255,255,255,0.45)"></div>
<div class="t" style="left:1264px;top:733px;font-size:12px;color:#111;letter-spacing:-0.8px">09:51</div>
<div class="t" style="left:1249px;top:750px;font-size:12.5px;color:#111;letter-spacing:-0.42px">04/12/2021</div>
<div class="a" style="left:1361px;top:728px;width:1px;height:40px;background:#c8ccb8"></div>

<!-- ICONS -->
<svg class="a" style="left:2px;top:25px" width="16" height="16"><use href="#gear"/></svg>
<svg class="a" style="left:2px;top:44px" width="16" height="16"><use href="#dollar"/></svg>
<svg class="a" style="left:164px;top:28px" width="8" height="9"><use href="#chev2d"/></svg>
<svg class="a" style="left:164px;top:47px" width="8" height="9"><use href="#chev2u"/></svg>
<svg class="a" style="left:13px;top:73px" width="16" height="16"><use href="#globe"/></svg>
<svg class="a" style="left:13px;top:95px" width="16" height="16"><use href="#crate"/></svg>
<svg class="a" style="left:13px;top:117px" width="16" height="16"><use href="#pin"/></svg>
<svg class="a" style="left:13px;top:139px" width="16" height="16"><use href="#inventory"/></svg>
<svg class="a" style="left:13px;top:161px" width="16" height="16"><use href="#voucher"/></svg>
<svg class="a" style="left:13px;top:183px" width="16" height="16"><use href="#yinyang"/></svg>
<svg class="a" style="left:13px;top:205px" width="16" height="16"><use href="#noentry"/></svg>
<svg class="a" style="left:13px;top:227px" width="16" height="16"><use href="#scroll"/></svg>
<svg class="a" style="left:13px;top:249px" width="16" height="16"><use href="#users2"/></svg>
<svg class="a" style="left:13px;top:271px" width="16" height="16"><use href="#userF"/></svg>
<svg class="a" style="left:13px;top:293px" width="16" height="16"><use href="#userM"/></svg>
<svg class="a" style="left:2px;top:321px" width="16" height="16"><use href="#keyBlue"/></svg>
<svg class="a" style="left:2px;top:340px" width="16" height="16"><use href="#book"/></svg>
<svg class="a" style="left:3px;top:359px" width="16" height="16"><use href="#moneybook"/></svg>
<svg class="a" style="left:164px;top:324px" width="8" height="9"><use href="#chev2d"/></svg>
<svg class="a" style="left:164px;top:343px" width="8" height="9"><use href="#chev2d"/></svg>
<svg class="a" style="left:164px;top:362px" width="8" height="9"><use href="#chev2d"/></svg>
<svg class="a" style="left:210px;top:63px" width="12" height="12"><use href="#plus"/></svg>
<svg class="a" style="left:352px;top:64px" width="16" height="12"><use href="#refresh"/></svg>
<svg class="a" style="left:432px;top:62px" width="10" height="16"><use href="#clip"/></svg>
<svg class="a" style="left:514px;top:62px" width="16" height="16"><use href="#userF"/></svg>
<svg class="a" style="left:634px;top:62px" width="16" height="16"><use href="#crate"/></svg>
<svg class="a" style="left:831px;top:62px" width="17" height="17"><use href="#users3"/></svg>
<svg class="a" style="left:932px;top:62px" width="17" height="17"><use href="#arrowG"/></svg>
<svg class="a" style="left:201px;top:141px" width="18" height="18"><use href="#dot"/></svg>
<svg class="a" style="left:201px;top:159px" width="18" height="18"><use href="#dot"/></svg>
<svg class="a" style="left:201px;top:177px" width="18" height="18"><use href="#dot"/></svg>
<svg class="a" style="left:202px;top:196px" width="16" height="16"><use href="#monitor"/></svg>
<svg class="a" style="left:202px;top:214px" width="16" height="16"><use href="#chat"/></svg>
<svg class="a" style="left:202px;top:232px" width="16" height="16"><use href="#chat"/></svg>
<svg class="a" style="left:202px;top:250px" width="16" height="16"><use href="#chat"/></svg>
<svg class="a" style="left:202px;top:268px" width="16" height="16"><use href="#chat"/></svg>
<svg class="a" style="left:201px;top:305px" width="16" height="14"><use href="#xl"/></svg>
<svg class="a" style="left:202px;top:322px" width="16" height="16"><use href="#tsel"/></svg>
<svg class="a" style="left:202px;top:340px" width="16" height="16"><use href="#tsel"/></svg>
<svg class="a" style="left:202px;top:360px" width="16" height="14"><use href="#sev"/></svg>
<svg class="a" style="left:202px;top:378px" width="16" height="14"><use href="#sev"/></svg>
<svg class="a" style="left:202px;top:398px" width="16" height="10"><use href="#three"/></svg>
<svg class="a" style="left:202px;top:412px" width="16" height="16"><use href="#gift"/></svg>
<svg class="a" style="left:202px;top:430px" width="16" height="16"><use href="#gift"/></svg>
<svg class="a" style="left:202px;top:448px" width="16" height="16"><use href="#gift"/></svg>
<div class="a" style="left:487px;top:257px;width:5px;height:4px;background:#e81a1a"></div>
<svg class="a" style="left:190px;top:145px" width="6" height="10"><path d="M1 1L5 5 1 9" stroke="#3a5a9a" stroke-width="1.6" fill="none"/></svg>
<div class="t" style="left:189px;top:126px;font-size:10px;color:#5a7ab8">&#10052;</div>
<svg class="a" style="left:631px;top:708px" width="17" height="17"><use href="#keyGold"/></svg>
<svg class="a" style="left:760px;top:709px" width="16" height="16"><use href="#userF"/></svg>
<svg class="a" style="left:862px;top:709px" width="16" height="16"><use href="#users2"/></svg>
<svg class="a" style="left:1093px;top:708px" width="17" height="17"><use href="#keyGold"/></svg>

<!-- TASKBAR ICONS -->
<svg class="a" style="left:500px;top:736px" width="26" height="24" viewBox="0 0 26 24"><defs><linearGradient id="edA" x1="0" y1="0" x2="1" y2="1"><stop offset="0" stop-color="#35c1f1"/><stop offset=".6" stop-color="#1a8ad8"/><stop offset="1" stop-color="#0c59a4"/></linearGradient><linearGradient id="edB" x1="0" y1="0" x2="1" y2="0"><stop offset="0" stop-color="#2bb8e8"/><stop offset="1" stop-color="#6fdc5a"/></linearGradient></defs><path d="M13 .5C20 .5 25 5 25 11c0 3.5-3 5.5-6.5 5.5-3 0-5-1.3-5-2.8 0-.6.5-1 .5-1.8 0-2.5-3-4.5-6-4.5C4 7.4 1.2 9.5.6 12 1.2 5.5 6.5.5 13 .5z" fill="url(#edB)"/><path d="M.6 12C1.2 9.5 4 7.4 7 7.4c3 0 6 2 6 4.5 0 .8-.5 1.2-.5 1.8 0 2 3 3.5 6 3.3 1.5-.1 2.5-.4 3.5-1-1.5 4.5-6 8-11 8C5 24 .5 18.5.6 12z" fill="url(#edA)"/></svg>
<svg class="a" style="left:547px;top:737px" width="23" height="21" viewBox="0 0 23 21"><path d="M.5 2.5h8l2 2h12v15.5H.5z" fill="#e8b830"/><rect x=".5" y="5.5" width="22" height="14.5" fill="#fcd45a"/><path d="M7 12h9v8h-2.5v-4.5h-4V20H7z" fill="#1a7ad8"/><rect x=".5" y=".8" width="7" height="2" fill="#d89a20"/></svg>
<svg class="a" style="left:592px;top:737px" width="26" height="22" viewBox="0 0 26 22"><path d="M.5 8L13 .5 25.5 8v13.5H.5z" fill="#0a5ab8"/><path d="M2.5 8.5L13 2.5l10.5 6v3L13 17 2.5 11.5z" fill="#fff"/><path d="M.5 9l12.5 7.5L25.5 9v12.5H.5z" fill="#28a8f0"/><path d="M.5 21.5l12.5-8 12.5 8z" fill="#50c8f8"/></svg>
<svg class="a" style="left:639px;top:737px" width="28" height="28" viewBox="0 0 28 28"><circle cx="12" cy="12" r="11.5" fill="#db4437"/><path d="M12 12L2 6.2A11.5 11.5 0 0 0 6.3 22z" fill="#0f9d58"/><path d="M12 12l-5.7 10A11.5 11.5 0 0 0 23.5 12z" fill="#ffcd40"/><path d="M12 .5A11.5 11.5 0 0 1 23.5 12H12z" fill="#db4437"/><circle cx="12" cy="12" r="5.3" fill="#fff"/><circle cx="12" cy="12" r="4.2" fill="#4285f4"/><circle cx="18.5" cy="19.5" r="7.5" fill="#5a3020"/><text x="18.5" y="23" text-anchor="middle" font-family="Liberation Sans" font-size="9" fill="#fff">y</text></svg>
<svg class="a" style="left:685px;top:737px" width="28" height="28" viewBox="0 0 28 28"><circle cx="12" cy="12" r="11.5" fill="#db4437"/><path d="M12 12L2 6.2A11.5 11.5 0 0 0 6.3 22z" fill="#0f9d58"/><path d="M12 12l-5.7 10A11.5 11.5 0 0 0 23.5 12z" fill="#ffcd40"/><circle cx="12" cy="12" r="5.3" fill="#fff"/><circle cx="12" cy="12" r="4.2" fill="#4285f4"/><circle cx="18.5" cy="19.5" r="7.5" fill="#1a8ad8"/><text x="18.5" y="23" text-anchor="middle" font-family="Liberation Sans" font-size="9" fill="#fff">y</text></svg>
<svg class="a" style="left:731px;top:736px" width="28" height="27" viewBox="0 0 28 27"><circle cx="12" cy="12" r="11.5" fill="#2aa3e0"/><path d="M5.5 11.5l12-4.8c.6-.2 1 .1.8 1l-2 9.5c-.1.6-.6.8-1.1.4l-3-2.3-1.5 1.4c-.2.2-.4.2-.5-.1l.2-3 5.5-5-6.8 4.3-2.8-.9c-.6-.2-.6-.6 0-.9z" fill="#fff"/><rect x="13" y="17" width="14.5" height="9.5" rx="2" fill="#e63a3a"/><text x="20.2" y="24.5" text-anchor="middle" font-family="Liberation Sans" font-size="8" fill="#fff">..53</text></svg>
<svg class="a" style="left:777px;top:736px" width="24" height="24" viewBox="0 0 24 24"><defs><radialGradient id="ffA" cx=".6" cy=".3" r=".8"><stop offset="0" stop-color="#ffe040"/><stop offset=".5" stop-color="#ff7a20"/><stop offset="1" stop-color="#e8305a"/></radialGradient></defs><circle cx="12" cy="13" r="10.5" fill="url(#ffA)"/><path d="M17 1c2 3 1 5 0 6-2-2-5-1-5-1" fill="#ffb020"/><circle cx="12.5" cy="13" r="5.5" fill="#7a3ad0"/><path d="M3 10c2 5 7 8 12 6" stroke="#ff9a30" stroke-width="3" fill="none"/></svg>
<svg class="a" style="left:823px;top:737px" width="23" height="23" viewBox="0 0 23 23"><rect x=".5" y=".5" width="20" height="20" fill="#a8d0ec" stroke="#5a8ab8"/><rect x="2.5" y="2.5" width="16" height="16" fill="#d8ecfa"/><circle cx="10.5" cy="10.5" r="6.5" fill="#f57c20"/><path d="M8.5 7v7l5.5-3.5z" fill="#fff"/><path d="M20.5 2l2 1v19l-19 .5-1-2" fill="#6a9ac8" opacity=".6"/></svg>
<svg class="a" style="left:868px;top:736px" width="24" height="24" viewBox="0 0 24 24"><g fill="#a8c8e0" stroke="#6a8aa8" stroke-width=".6"><path d="M8 1h3l.4 2.3 1.5.6 1.9-1.4 2.1 2.1-1.4 1.9.6 1.5 2.3.4v3l-2.3.4-.6 1.5 1.4 1.9-2.1 2.1-1.9-1.4-1.5.6L11 19H8l-.4-2.3-1.5-.6-1.9 1.4-2.1-2.1 1.4-1.9-.6-1.5L.6 11.6V8.6l2.3-.4.6-1.5-1.4-1.9 2.1-2.1 1.9 1.4 1.5-.6z"/><circle cx="18" cy="18" r="5.3"/></g><circle cx="9.5" cy="10" r="3" fill="#e8eef4" stroke="#6a8aa8" stroke-width=".6"/><circle cx="18" cy="18" r="2" fill="#e8eef4"/></svg>
<svg class="a" style="left:913px;top:736px" width="25" height="25" viewBox="0 0 25 25"><circle cx="12.5" cy="12.5" r="12" fill="#0c1640"/><text x="5" y="15.5" font-family="Liberation Sans" font-weight="bold" font-size="8.5" fill="#fff" letter-spacing="-0.6">RS</text><text x="15" y="17" font-family="Liberation Sans" font-weight="bold" font-size="8" fill="#2ad04a">x</text></svg>
<svg class="a" style="left:957px;top:737px" width="25" height="23" viewBox="0 0 25 23"><path d="M5 3l18-2 1.5 19L6 22.5z" fill="#f4f4f4" stroke="#8a9aa8" stroke-width=".6"/><path d="M2 4l17-2 2.5 18.5L4 22z" fill="#9ad8e8" stroke="#4a8aa0" stroke-width=".6"/><path d="M2 4l17-2 .4 2.5L2.3 6.5z" fill="#6ab8d0"/></svg>
<svg class="a" style="left:1020px;top:739px" width="22" height="20" viewBox="0 0 22 20"><circle cx="9" cy="9.5" r="9" fill="#f8b828"/><circle cx="8" cy="8" r="7" fill="#fcd040"/><path d="M9 15c-2 0-3-1-3-2.3s1-2.2 2.3-2.2c.5-1.8 2-2.8 3.8-2.8 2.2 0 3.6 1.6 3.8 3.4 1.5 0 2.6 1 2.6 2s-1 1.9-2.4 1.9z" fill="#dceefa" stroke="#a8c8e0" stroke-width=".5"/></svg>
<div class="t" style="left:1050px;top:741.5px;font-size:13.8px;letter-spacing:-0.25px;color:#111">31°C</div>
<svg class="a" style="left:1096px;top:743px" width="14" height="8"><path d="M1 7L7 1.3 13 7" stroke="#111" stroke-width="1.4" fill="none"/></svg>
<svg class="a" style="left:1121px;top:740px" width="13" height="17"><path d="M3 3.5c1-1 6-1 7 0M3 13.5c1 1 6 1 7 0" stroke="#111" stroke-width="1" fill="none"/><rect x="1" y="5" width="7.5" height="7" rx="1.5" stroke="#111" stroke-width="1.1" fill="none"/><path d="M8.5 7.5l3-1.8v5.6l-3-1.8" stroke="#111" stroke-width="1" fill="none"/></svg>
<svg class="a" style="left:1142px;top:739px" width="19" height="18"><path d="M1 3.5L17 1v12.5L1 15z" stroke="#111" stroke-width="1.1" fill="none"/><path d="M6 10c0-2 1.5-3.5 3.5-3.5M12 7.5c0 2-1.5 3.5-3.5 3.5" stroke="#111" stroke-width=".9" fill="none"/><circle cx="14" cy="14.5" r="3" fill="#2a78d0"/></svg>
<svg class="a" style="left:1166px;top:742px" width="18" height="12"><path d="M1 1.5v3.5h3V1.5M2.5 5v5" stroke="#111" stroke-width="1" fill="none"/><rect x="5.5" y="2.5" width="10.5" height="7" stroke="#111" stroke-width="1" fill="none"/><rect x="7" y="4" width="4" height="4" fill="#111"/><rect x="16" y="4.5" width="1.5" height="3" fill="#111"/></svg>
<svg class="a" style="left:1193px;top:742px" width="15" height="14"><path d="M1 13c0-6 5-11 11-11M3.5 13c0-4.5 3.5-8 8-8M6 13c0-3 2.5-5.5 5.5-5.5" stroke="#111" stroke-width="1.1" fill="none"/><circle cx="11" cy="12" r="1.3" fill="#111"/></svg>
<svg class="a" style="left:1215px;top:741px" width="24" height="14"><rect x=".6" y=".6" width="22.5" height="12" stroke="#111" stroke-width="1.2" fill="none"/><path d="M3 4h18M3 6.5h18" stroke="#111" stroke-width="1" stroke-dasharray="1.2 1"/><path d="M6 9.5h12" stroke="#111" stroke-width="1.1"/></svg>
<svg class="a" style="left:1325px;top:739px" width="25" height="26"><path d="M.5 1.5h15v11H6l-5.5 5z" fill="#000"/><path d="M3 4.5h10M3 7h10M3 9.5h7" stroke="#fff" stroke-width="1"/><circle cx="15.5" cy="16.5" r="7.5" fill="#d0d0c8" stroke="#909088" stroke-width="1"/><text x="15.5" y="20.5" text-anchor="middle" font-family="Liberation Sans" font-size="11" fill="#111">2</text></svg>

<!-- MENUS -->
<div class="a" style="left:200px;top:82px;width:197px;height:49px;background:#f2f2f2;border:1px solid #a0a0a0;box-shadow:inset 1px 1px 0 #fff,inset -1px -1px 0 #fafafa,2px 2px 2px rgba(0,0,0,0.45)"></div>
<div class="a" style="left:203px;top:107px;width:193px;height:22px;background:#91c9f7"></div>
<div class="t" style="left:234px;top:90px;font-size:11.6px">Terminal Center &amp; Sender</div>
<div class="t" style="left:234px;top:112px;font-size:11.6px">Terminal Operator</div>
<svg class="a" style="left:382px;top:91px" width="5" height="8"><path d="M0 0L4.5 4L0 8Z" fill="#000"/></svg>
<svg class="a" style="left:382px;top:113px" width="5" height="8"><path d="M0 0L4.5 4L0 8Z" fill="#fff"/></svg>

<div class="a" style="left:391px;top:104px;width:146px;height:94px;background:#f2f2f2;border:1px solid #a0a0a0;box-shadow:inset 1px 1px 0 #fff,inset -1px -1px 0 #fafafa,2px 2px 2px rgba(0,0,0,0.45)"></div>
<div class="t" style="left:425px;top:112px;font-size:11.6px">Operator GSM</div>
<div class="t" style="left:425px;top:134px;font-size:11.6px">Operator Jabber</div>
<div class="t" style="left:425px;top:156px;font-size:11.6px">H2H</div>
<div class="t" style="left:425px;top:178px;font-size:11.6px">Pulsa Transfer</div>
<svg class="a" style="left:523px;top:113px" width="5" height="8"><path d="M0 0L4.5 4L0 8Z" fill="#000"/></svg>
<svg class="a" style="left:523px;top:179px" width="5" height="8"><path d="M0 0L4.5 4L0 8Z" fill="#000"/></svg>
<div class="a" style="left:389px;top:146px;width:143px;height:25px;border:3px solid #e5141f"></div>
<svg class="a" style="left:397px;top:110px" width="16" height="16"><use href="#orangebtn"/></svg>
<svg class="a" style="left:396px;top:131px" width="18" height="17" viewBox="0 0 18 17"><path d="M1 1h12v8.5H6l-3 3v-3H1z" fill="#5aa8f0" stroke="#2a6ac8" stroke-width=".8"/><rect x="2" y="2" width="10" height="3" fill="#a8d4fa"/><path d="M6 6.5h11v7.5h-3l-2 2.5-1-2.5H6z" fill="#9ad838" stroke="#5a9a18" stroke-width=".8"/><rect x="7" y="7.5" width="9" height="2.5" fill="#c8f078"/></svg>
<svg class="a" style="left:397px;top:154px" width="16" height="16"><use href="#monitor"/></svg>
<svg class="a" style="left:397px;top:176px" width="16" height="16"><use href="#gift"/></svg>
</body></html>
